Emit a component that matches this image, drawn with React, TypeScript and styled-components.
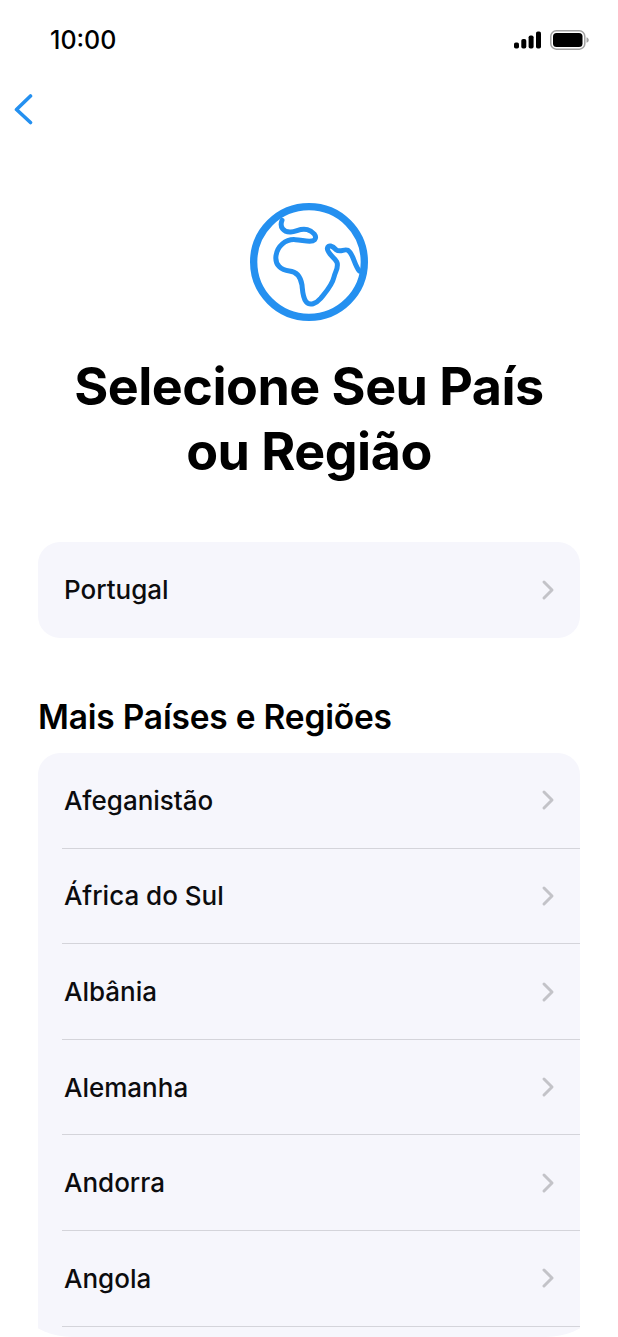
import React from "react";
import styled, { createGlobalStyle } from "styled-components";

const GlobalStyle = createGlobalStyle`
  html, body {
    margin: 0;
    padding: 0;
    background: #fff;
  }
`;

const Screen = styled.div`
  width: 618px;
  height: 1337px;
  overflow: hidden;
  background: #fff;
  border-radius: 0 0 72px 72px;
  font-family: Inter, "Liberation Sans", sans-serif;
  color: #000;
`;

const StatusBar = styled.div`
  display: flex;
  justify-content: space-between;
  align-items: center;
  height: 40px;
  padding: 20px 29px 20px 50px;
`;

const Clock = styled.span`
  font-size: 25px;
  font-weight: 500;
  line-height: 40px;
`;

const StatusIcons = styled.div`
  display: flex;
  align-items: center;
  gap: 9px;
`;

const NavBar = styled.div`
  display: flex;
  align-items: center;
  height: 40px;
  padding: 9px 0 0 13px;
`;

const Hero = styled.div`
  display: flex;
  flex-direction: column;
  align-items: center;
  padding-top: 73px;
`;

const Title = styled.h1`
  margin: 32px 0 0;
  width: 100%;
  text-align: center;
  font-size: 52px;
  line-height: 65px;
  font-weight: 700;
  letter-spacing: -0.5px;
`;

const Content = styled.div`
  padding: 58px 38px 0;
`;

const Card = styled.div<{ $open?: boolean }>`
  background: #f6f6fc;
  border-radius: 22px;
  overflow: hidden;
  padding-bottom: ${(p) => (p.$open ? "40px" : "0")};
`;

const SectionTitle = styled.h2`
  margin: 56px 0 13.5px;
  font-size: 33.5px;
  line-height: 46px;
  font-weight: 600;
  letter-spacing: -0.2px;
`;

const Row = styled.div<{ $divider: boolean }>`
  display: flex;
  align-items: center;
  justify-content: space-between;
  box-sizing: border-box;
  height: 95.6px;
  margin-left: 24px;
  padding: 0 25px 0 2px;
  border-bottom: ${(p) => (p.$divider ? "1px solid #d4d4da" : "none")};
`;

const RowLabel = styled.span`
  font-size: 26px;
  font-weight: 500;
  color: #0c0c0e;
`;

const Chevron = () => (
  <svg width="14" height="22" viewBox="0 0 14 22" fill="none">
    <path d="M3 3L11 11L3 19" stroke="#c3c3c8" strokeWidth="3" strokeLinecap="round" strokeLinejoin="round" />
  </svg>
);

const BackIcon = () => (
  <svg width="22" height="32" viewBox="0 0 22 32" fill="none">
    <path d="M17.5 3L3.5 16.500L17.5 29.500" stroke="#2490f0" strokeWidth="3.6" strokeLinecap="round" strokeLinejoin="round" />
  </svg>
);

const SignalIcon = () => (
  <svg width="27" height="18" viewBox="0 0 27 18">
    <rect x="0" y="11.5" width="5" height="6" rx="1.800" fill="#000" />
    <rect x="7.300" y="8" width="5" height="9.500" rx="1.800" fill="#000" />
    <rect x="14.600" y="4.500" width="5" height="13" rx="1.800" fill="#000" />
    <rect x="22" y="0.500" width="5" height="17" rx="1.800" fill="#000" />
  </svg>
);

const BatteryIcon = () => (
  <svg width="39" height="20" viewBox="0 0 39 20">
    <rect x="0.800" y="0.800" width="34" height="18.400" rx="5.500" fill="none" stroke="#a2a2a2" strokeWidth="1.500" />
    <rect x="3" y="3" width="29.500" height="14" rx="3.500" fill="#000" />
    <path d="M36.500 7.200C38 7.700 38.800 8.800 38.800 10C38.800 11.200 38 12.300 36.500 12.800Z" fill="#a2a2a2" />
  </svg>
);

const GlobeIcon = () => (
  <svg width="120" height="120" viewBox="57 37 360 360" fill="none">
    <circle cx="237" cy="217" r="166" stroke="#2490f0" strokeWidth="22" />
    <path
      d="M156 92C148 112 160 128 182 127C200 126 212 114 232 120C250 125 262 140 254 150C244 160 222 152 196 150C166 148 142 170 138 198C134 226 154 242 178 244C200 246 212 262 216 286C218 306 218 322 228 336C240 350 258 342 272 326C290 304 306 288 312 262C316 244 328 232 320 216C312 202 292 192 292 176C294 164 308 168 318 180C332 190 342 176 354 182C370 192 372 224 388 244"
      stroke="#2490f0"
      strokeWidth="15"
      strokeLinecap="round"
      strokeLinejoin="round"
    />
  </svg>
);

const countries = ["Afeganistão", "África do Sul", "Albânia", "Alemanha", "Andorra", "Angola"];

export default function App() {
  return (
    <Screen>
      <GlobalStyle />
      <StatusBar>
        <Clock>10:00</Clock>
        <StatusIcons>
          <SignalIcon />
          <BatteryIcon />
        </StatusIcons>
      </StatusBar>
      <NavBar>
        <BackIcon />
      </NavBar>
      <Hero>
        <GlobeIcon />
        <Title>
          Selecione Seu País
          <br />
          ou Região
        </Title>
      </Hero>
      <Content>
        <Card>
          <Row $divider={false}>
            <RowLabel>Portugal</RowLabel>
            <Chevron />
          </Row>
        </Card>
        <SectionTitle>Mais Países e Regiões</SectionTitle>
        <Card $open>
          {countries.map((name) => (
            <Row key={name} $divider>
              <RowLabel>{name}</RowLabel>
              <Chevron />
            </Row>
          ))}
        </Card>
      </Content>
    </Screen>
  );
}
